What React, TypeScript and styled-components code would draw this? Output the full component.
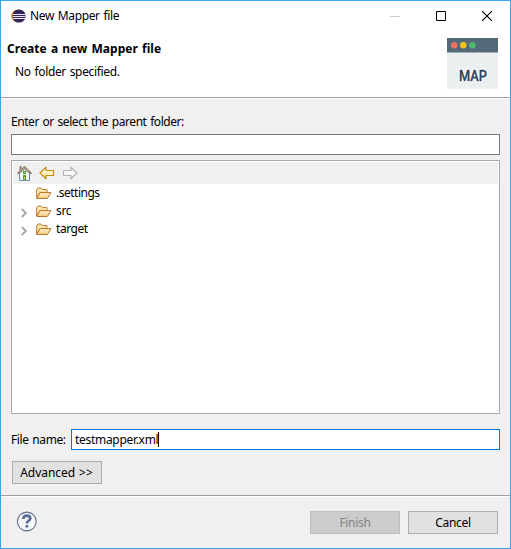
import React from "react";
import styled, { createGlobalStyle } from "styled-components";

const GlobalStyle = createGlobalStyle`
  * { box-sizing: border-box; }
  body { margin: 0; }
  svg { display: block; flex: none; }
`;

const Dialog = styled.div`
  width: 511px;
  height: 549px;
  display: flex;
  flex-direction: column;
  border: 1px solid #38a5ee;
  background: #f0f0f0;
  color: #000;
  font: 12px/18px "Noto Sans", "Open Sans", sans-serif;
`;

const Text = styled.span<{ $spacing?: number; $bold?: boolean }>`
  white-space: pre;
  letter-spacing: ${(p) => p.$spacing ?? -0.3}px;
  word-spacing: 1px;
  font-weight: ${(p) => (p.$bold ? 700 : 400)};
`;

const TitleBar = styled.header`
  height: 30px;
  display: flex;
  align-items: center;
  gap: 4px;
  padding-left: 10px;
  background: #fff;
`;

const WindowControls = styled.div`
  display: flex;
  margin-left: auto;
`;

const WindowButton = styled.div`
  width: 46px;
  height: 28px;
  display: flex;
  justify-content: center;
  align-items: center;
`;

const Banner = styled.section`
  height: 66px;
  display: flex;
  justify-content: space-between;
  padding: 7px 12px 0 6px;
  background: #fff;
`;

const BannerText = styled.div`
  display: flex;
  flex-direction: column;
  gap: 5px;
  padding-top: 2px;
`;

const Message = styled.div`
  padding-left: 8px;
`;

const Separator = styled.div`
  height: 2px;
  flex: none;
  background: #fff;
  border-top: 1px solid #a0a0a0;
`;

const Content = styled.main`
  flex: none;
  height: 396px;
  display: flex;
  flex-direction: column;
  align-items: flex-start;
  padding: 14px 10px 0;
`;

const TextField = styled.div<{ $focused?: boolean }>`
  height: 21px;
  flex: 1;
  min-width: 0;
  display: flex;
  align-items: center;
  padding-left: 3px;
  background: #fff;
  border: 1px solid ${(p) => (p.$focused ? "#0078d7" : "#7a7a7a")};
`;

const ParentField = styled(TextField)`
  flex: none;
  width: 100%;
  margin-top: 3px;
`;

const Caret = styled.span`
  width: 1px;
  height: 15px;
  background: #000;
`;

const Tree = styled.div`
  width: 100%;
  height: 254px;
  flex: none;
  margin-top: 5px;
  padding: 1px;
  background: #fff;
  border: 1px solid #a6a8ae;
`;

const TreeToolbar = styled.div`
  height: 22px;
  display: flex;
  align-items: center;
  gap: 7px;
  padding-left: 4px;
  background: #f0f0f0;
`;

const TreeRow = styled.div`
  height: 18px;
  display: grid;
  grid-template-columns: 23px 20px auto;
  align-items: center;
  justify-content: start;
`;

const TwistySlot = styled.span`
  padding: 3px 0 0 8px;
`;

const FileRow = styled.div`
  width: 100%;
  display: flex;
  align-items: center;
  margin-top: 15px;
`;

const FieldLabel = styled.label`
  width: 60px;
  flex: none;
`;

const PushButton = styled.div<{ $disabled?: boolean }>`
  width: 90px;
  height: 23px;
  flex: none;
  display: flex;
  justify-content: center;
  align-items: center;
  border: 1px solid ${(p) => (p.$disabled ? "#bfbfbf" : "#adadad")};
  background: ${(p) => (p.$disabled ? "#ccc" : "#e1e1e1")};
  color: ${(p) => (p.$disabled ? "#838383" : "#000")};
`;

const AdvancedButton = styled(PushButton)`
  margin: 11px 0 0 1px;
  padding-right: 1px;
`;

const Footer = styled.footer`
  flex: 1;
  display: flex;
  align-items: flex-start;
  gap: 8px;
  padding: 14px 12px 0 15px;
`;

const HelpSlot = styled.div`
  margin-right: auto;
`;

const EclipseIcon = () => (
  <svg width="15" height="14" viewBox="0 0 15 14">
    <circle cx="6.7" cy="7" r="6.5" fill="#f29426" />
    <circle cx="8" cy="7" r="6.6" fill="#30255f" />
    <path d="M2 5.5h12M1.8 7.5h12.4M2 9.5h12" stroke="#e9e6f4" />
  </svg>
);

const MapperArt = () => (
  <svg width="51" height="51" viewBox="0 0 51 51">
    <path fill="#ebeff0" d="M0 0h51v51H0z" />
    <path fill="#546a79" d="M0 0h51v14.5H0z" />
    <circle cx="7.2" cy="7.3" r="3.2" fill="#ed7161" />
    <circle cx="16.3" cy="7.3" r="3.2" fill="#f0c419" />
    <circle cx="25.5" cy="7.3" r="3.2" fill="#4fba6f" />
    <text x="12" y="43" textLength="28" lengthAdjust="spacingAndGlyphs" fontFamily="Roboto, sans-serif" fontSize="14" fontWeight="500" fill="none" stroke="#fff" strokeWidth="2.4" strokeLinejoin="round">MAP</text>
    <text x="12" y="43" textLength="28" lengthAdjust="spacingAndGlyphs" fontFamily="Roboto, sans-serif" fontSize="14" fontWeight="500" fill="#2c455b" stroke="#2c455b" strokeWidth=".3">MAP</text>
  </svg>
);

const HomeIcon = () => (
  <svg width="15" height="16" viewBox="0 0 15 16">
    <path d="M2.5 8.5 7.5 4l5 4.5v6.9h-10z" fill="#f4fafe" stroke="#6286a8" />
    <path d="M3.5 1v5" stroke="#92806a" strokeWidth="2" />
    <path d="M.7 8.8 7.5 2.2l6.8 6.6" fill="none" stroke="#8c7b60" strokeWidth="2" />
    <path d="M2 7.6 7.5 2.4l5 4.8" fill="none" stroke="#cebd98" strokeWidth=".8" />
    <path d="M6 6h3v3H6zM6 10h3v5H6z" fill="#5c9c35" />
    <path d="M7 7h1v1H7zM7 12h1v2H7z" fill="#d3dc55" />
  </svg>
);

const ArrowIcon = ({ forward = false }: { forward?: boolean }) => (
  <svg width="16" height="14" viewBox="0 0 16 14">
    <defs>
      <linearGradient id="arrowGold" x1="0" y1="0" x2="0" y2="1">
        <stop offset="0" stopColor="#fffdf0" />
        <stop offset="1" stopColor="#ffe58e" />
      </linearGradient>
    </defs>
    <path
      d={forward ? "M15 7 9 1.2v3.3H1.5v5H9v3.3z" : "M1 7l6-5.8v3.3h7.5v5H7v3.3z"}
      fill={forward ? "#f6f6f6" : "url(#arrowGold)"}
      stroke={forward ? "#b5b5b5" : "#c58b1b"}
      strokeWidth="1.2"
      strokeLinejoin="round"
    />
  </svg>
);

const FolderIcon = () => (
  <svg width="16" height="13" viewBox="0 0 16 13">
    <defs>
      <linearGradient id="folderFace" x1="0" y1="0" x2="0" y2="1">
        <stop offset="0" stopColor="#fff3cd" />
        <stop offset="1" stopColor="#f3c87b" />
      </linearGradient>
    </defs>
    <path d="M.6 11V2.5L2 1h3l1.5 1.5H11v3H4z" fill="#f9e0a8" stroke="#bd8138" strokeLinejoin="round" />
    <path d="M.7 11.5 4.1 5.6H15l-3.6 5.9z" fill="url(#folderFace)" stroke="#b8772d" strokeLinejoin="round" />
  </svg>
);

const Twisty = () => (
  <svg width="7" height="10" viewBox="0 0 7 10">
    <path d="m.8 1 4 4-4 4" fill="none" stroke="#a6a6a6" strokeWidth="1.8" />
  </svg>
);

const HelpIcon = () => (
  <svg width="21" height="21" viewBox="0 0 21 21">
    <circle cx="10.8" cy="10.5" r="9.4" fill="#f5f6f8" stroke="#5f7090" strokeWidth="1.1" />
    <path d="M7.3 8C7.3 5.6 8.8 4.6 10.8 4.6c2 0 3.5 1 3.5 2.8 0 2.4-3.4 2.5-3.4 5.1" fill="none" stroke="#566b91" strokeWidth="2.6" />
    <path d="M9.5 14h2.8v2.5H9.5z" fill="#566b91" />
  </svg>
);

const folders = [
  { name: ".settings", expandable: false, spacing: -0.5 },
  { name: "src", expandable: true, spacing: -0.3 },
  { name: "target", expandable: true, spacing: -0.45 },
];

export default function App() {
  return (
    <>
      <GlobalStyle />
      <Dialog>
        <TitleBar>
          <EclipseIcon />
          <Text $spacing={-0.36}>New Mapper file</Text>
          <WindowControls>
            <WindowButton>
              <svg width="10" height="10"><path d="M0 5.5h10" stroke="#ccc" /></svg>
            </WindowButton>
            <WindowButton>
              <svg width="10" height="10"><path d="M.5.5h9v9h-9z" fill="none" stroke="#000" /></svg>
            </WindowButton>
            <WindowButton>
              <svg width="10" height="10"><path d="m0 0 10 10M10 0 0 10" stroke="#000" strokeWidth="1.1" /></svg>
            </WindowButton>
          </WindowControls>
        </TitleBar>
        <Banner>
          <BannerText>
            <Text $bold $spacing={0.03}>Create a new Mapper file</Text>
            <Message><Text $spacing={-0.35}>No folder specified.</Text></Message>
          </BannerText>
          <MapperArt />
        </Banner>
        <Separator />
        <Content>
          <Text $spacing={-0.45}>Enter or select the parent folder:</Text>
          <ParentField />
          <Tree>
            <TreeToolbar>
              <HomeIcon />
              <ArrowIcon />
              <ArrowIcon forward />
            </TreeToolbar>
            {folders.map((f) => (
              <TreeRow key={f.name}>
                <TwistySlot>{f.expandable && <Twisty />}</TwistySlot>
                <FolderIcon />
                <Text $spacing={f.spacing}>{f.name}</Text>
              </TreeRow>
            ))}
          </Tree>
          <FileRow>
            <FieldLabel><Text $spacing={-0.4}>File name:</Text></FieldLabel>
            <TextField $focused>
              <Text>testmapper.xml</Text>
              <Caret />
            </TextField>
          </FileRow>
          <AdvancedButton><Text $spacing={-0.05}>Advanced &gt;&gt;</Text></AdvancedButton>
        </Content>
        <Separator />
        <Footer>
          <HelpSlot><HelpIcon /></HelpSlot>
          <PushButton $disabled><Text>Finish</Text></PushButton>
          <PushButton><Text>Cancel</Text></PushButton>
        </Footer>
      </Dialog>
    </>
  );
}
